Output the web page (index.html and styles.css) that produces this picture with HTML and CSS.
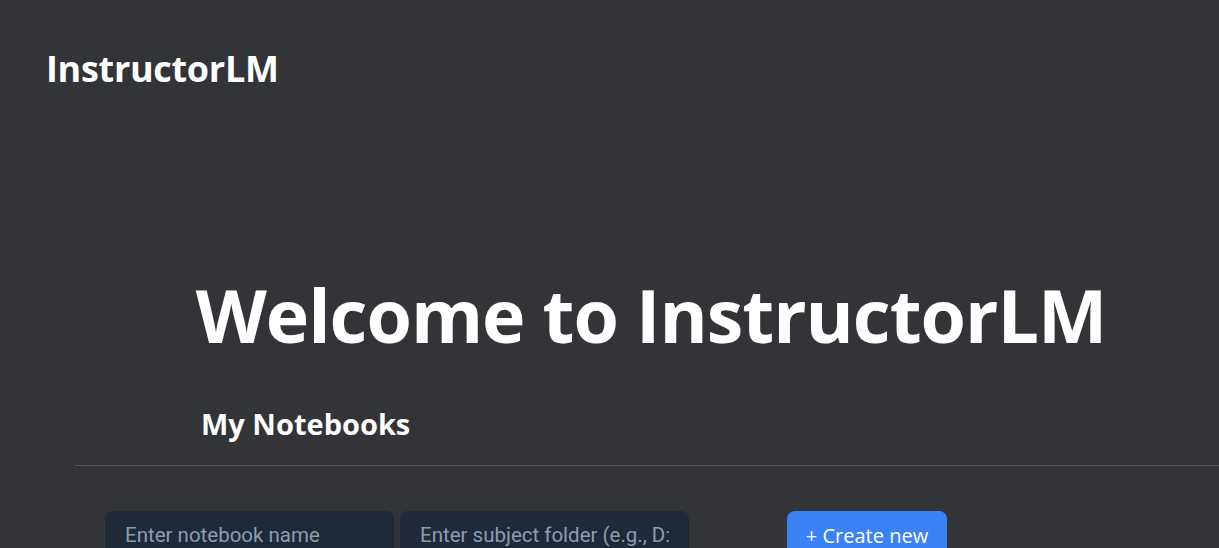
FILE: index.html
```html
<!DOCTYPE html>
<html lang="en">
<head>
<meta charset="utf-8">
<title>InstructorLM</title>
<link rel="stylesheet" href="styles.css">
</head>
<body>
<header class="topbar">
  <div class="logo">InstructorLM</div>
</header>
<main class="main">
  <h1 class="welcome">Welcome to InstructorLM</h1>
  <section class="notebooks">
    <h2 class="section-title">My Notebooks</h2>
    <div class="divider"></div>
    <div class="create-row">
      <input class="field" type="text" placeholder="Enter notebook name">
      <input class="field" type="text" placeholder="Enter subject folder (e.g., D:\Courses\Math)">
      <button class="create-btn">+ Create new</button>
    </div>
  </section>
</main>
</body>
</html>
```
FILE: styles.css
```css
* { box-sizing: border-box; }
html, body { margin: 0; padding: 0; }
body {
  background: #333438;
  color: #ffffff;
  font-family: "Open Sans", "Noto Sans", sans-serif;
  overflow: hidden;
  width: 1219px;
  height: 548px;
}
.topbar {
  padding: 47px 0 0 46px;
  height: 100px;
}
.logo {
  font-size: 36px;
  font-weight: 700;
  line-height: 44px;
  letter-spacing: -0.3px;
}
.main {
  margin-left: 75px;
  width: 1152px;
  padding-top: 170px;
}
.welcome {
  margin: 0;
  text-align: center;
  font-size: 73.5px;
  font-weight: 700;
  line-height: 90px;
  letter-spacing: -1px;
}
.notebooks {
  margin-top: 44px;
}
.section-title {
  margin: 0 0 0 126px;
  font-size: 29px;
  font-weight: 700;
  line-height: 40px;
}
.divider {
  height: 1px;
  background: #56575c;
  margin-top: 21px;
}
.create-row {
  display: flex;
  align-items: flex-start;
  margin: 45px 0 0 30px;
}
.field {
  width: 289px;
  height: 48px;
  border: none;
  border-radius: 8px;
  background: #1f2937;
  color: #e5e7eb;
  font-family: Roboto, "Liberation Sans", sans-serif;
  font-size: 20.5px;
  padding: 0 20px;
  outline: none;
  margin-right: 6px;
}
.field::placeholder { color: #8d9db0; }
.create-btn {
  margin-left: 92px;
  width: 160px;
  height: 48px;
  border: none;
  border-radius: 8px;
  background: #3b82f6;
  color: #ffffff;
  font-family: "Open Sans", "Noto Sans", sans-serif;
  font-size: 20px;
  font-weight: 500;
}
```
